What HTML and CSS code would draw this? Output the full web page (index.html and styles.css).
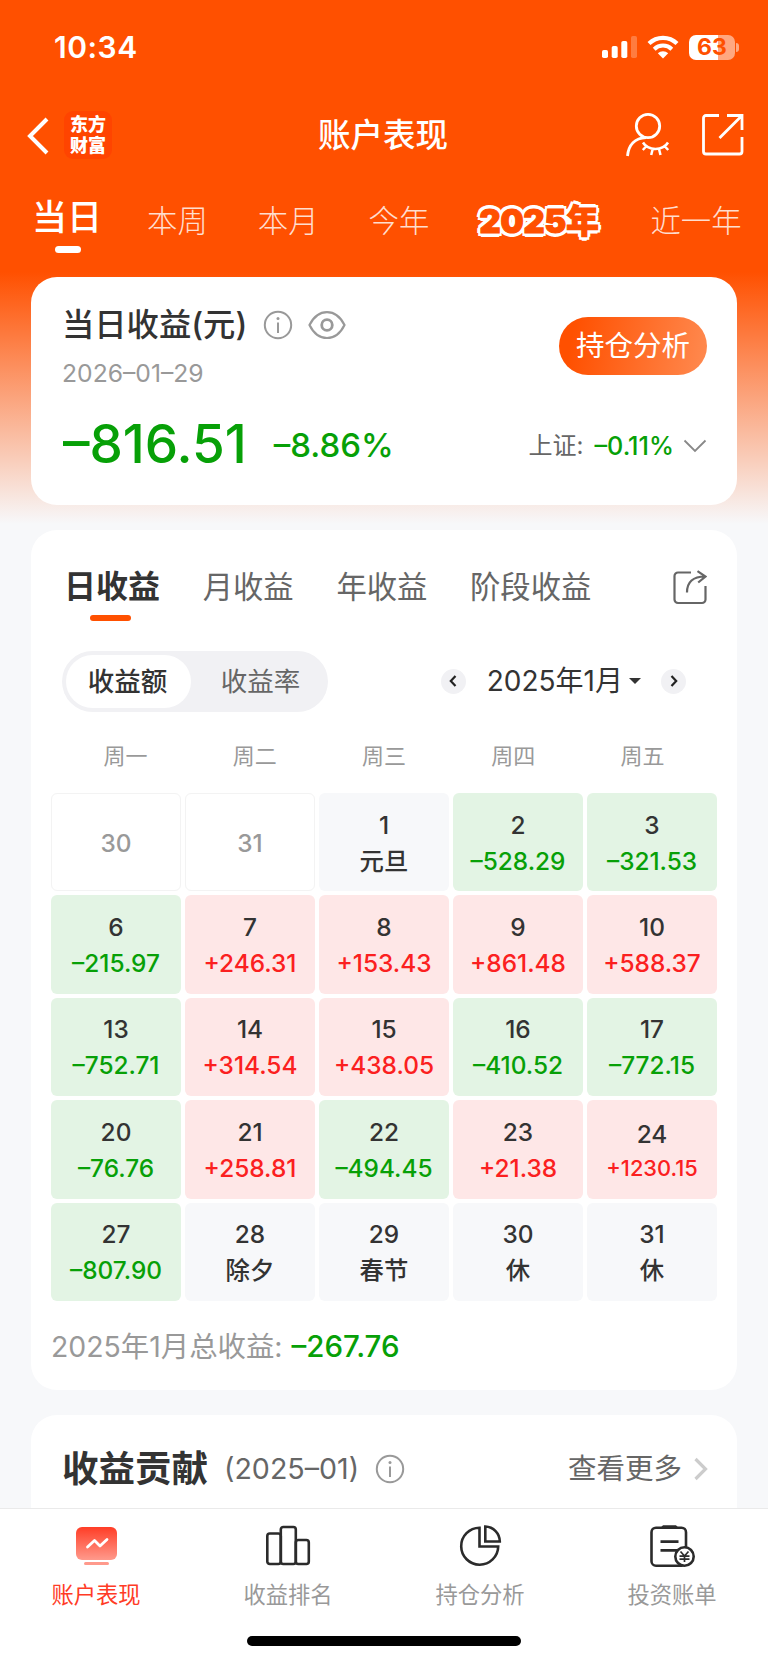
FILE: index.html
```
<!DOCTYPE html>
<html lang="zh-CN">
<head>
  <meta charset="UTF-8" />
  <title>账户表现</title>
  <link rel="stylesheet" href="styles.css">
</head>
<body>
  <div class="page">
    <div class="status">
      <span class="time">10:34</span>
      <div class="status-icons">
        <svg class="signal" width="36" height="24" viewBox="0 0 36 24" fill="#fff">
          <rect x="0" y="15" width="6" height="8" rx="1.8"/>
          <rect x="9.7" y="11" width="6" height="12" rx="1.8"/>
          <rect x="19.3" y="6" width="6" height="17" rx="1.8"/>
          <rect x="29" y="1" width="6" height="22" rx="1.8" opacity=".25"/>
        </svg>
        <svg class="wifi" width="32" height="24" viewBox="0 0 32 24" fill="none" stroke="#fff">
          <path d="M2 8.600a20 20 0 0 1 28 0" stroke-width="4.200"/>
          <path d="M7.200 14.200a12.600 12.600 0 0 1 17.600 0" stroke-width="4"/>
          <path d="M10.800 18.200a7.600 7.600 0 0 1 10.400 0L16 23.400z" fill="#fff" stroke="none"/>
        </svg>
        <div class="battery"><span>63</span></div>
        <i class="battery-nub"></i>
      </div>
    </div>

    <div class="nav">
      <svg class="back" width="22" height="38" viewBox="0 0 22 38" fill="none" stroke="#fff" stroke-width="4"><path d="M20 2L3 19l17 17"/></svg>
      <div class="logo">东方<br>财富</div>
      <h1>账户表现</h1>
      <svg class="user" width="46" height="46" viewBox="0 0 46 46" fill="none" stroke="#fff" stroke-width="2.8">
        <circle cx="24" cy="14" r="11.7"/>
        <path d="M3.500 44C4.500 33 11 26 22 25.500"/>
        <path d="M19 30.500c5 8.500 20 8.500 25 0M22.500 34l-3.700 4M28.700 37l-1.500 6M35 37l1.500 6M40.500 34l3.700 4" stroke-width="2.500"/>
      </svg>
      <svg class="share" width="44" height="44" viewBox="0 0 44 44" fill="none" stroke="#fff" stroke-width="2.8">
        <path d="M18 2.500H5a2.500 2.500 0 0 0-2.500 2.500v33.500A2.500 2.500 0 0 0 5 41h33.500a2.500 2.500 0 0 0 2.500-2.500V24M26 2.500h15V17M41 2.500L18.500 25"/>
      </svg>
    </div>

    <div class="periods">
      <span class="on">当日</span>
      <span>本周</span>
      <span>本月</span>
      <span>今年</span>
      <span class="year">2025年</span>
      <span>近一年</span>
    </div>

    <div class="content">
      <div class="card summary">
        <div class="left">
          <div class="title">
            <h2>当日收益(元)</h2>
            <svg class="info" width="30" height="30" viewBox="0 0 30 30" fill="none" stroke="#999" stroke-width="2"><circle cx="15" cy="15" r="13.200"/><path d="M15 12.500v10.500"/><circle cx="15" cy="8.500" r="1.500" fill="#999" stroke="none"/></svg>
            <svg class="eye" width="38" height="30" viewBox="0 0 38 30" fill="none" stroke="#999" stroke-width="2.200"><path d="M1.500 15C10-2.300 28-2.300 36.500 15 28 32.300 10 32.300 1.500 15z"/><circle cx="19" cy="15" r="5.300" stroke-width="2.800"/></svg>
          </div>
          <p class="date">2026–01–29</p>
          <p class="amount green"><b>–816.51</b><span>–8.86%</span></p>
        </div>
        <div class="right">
          <button>持仓分析</button>
          <p class="index">上证: <b class="green">–0.11%</b><svg width="24" height="14" viewBox="0 0 24 14" fill="none" stroke="#888" stroke-width="1.8"><path d="M1.500 1.500L12 12 22.500 1.500"/></svg></p>
        </div>
      </div>

      <div class="card calendar">
        <div class="tabs">
          <span class="on">日收益</span>
          <span>月收益</span>
          <span>年收益</span>
          <span class="stage">阶段收益</span>
          <svg width="34" height="36" viewBox="0 0 34 36" fill="none" stroke="#666" stroke-width="2.200">
            <path d="M18 3.500H5A3.500 3.500 0 0 0 1.500 7v23.500A3.500 3.500 0 0 0 5 34h24a3.500 3.500 0 0 0 3.500-3.500V17"/>
            <path d="M14 23.500C14 13 20 7.500 32 7.500M24.500 2.200l8 5.300-7.300 6"/>
          </svg>
        </div>

        <div class="tools">
          <div class="switch"><span class="on">收益额</span><span>收益率</span></div>
          <div class="month">
            <i class="arrow"><svg width="8" height="12" viewBox="0 0 8 12" fill="none" stroke="#222" stroke-width="2.200"><path d="M6.500 1L1.800 6l4.700 5"/></svg></i>
            <span>2025年1月</span>
            <i class="caret"></i>
            <i class="arrow"><svg width="8" height="12" viewBox="0 0 8 12" fill="none" stroke="#222" stroke-width="2.200"><path d="M1.500 1l4.700 5-4.700 5"/></svg></i>
          </div>
        </div>

        <div class="week"><span>周一</span><span>周二</span><span>周三</span><span>周四</span><span>周五</span></div>

        <div class="days">
          <div class="day out">30</div>
          <div class="day out">31</div>
          <div class="day rest">1<span>元旦</span></div>
          <div class="day down">2<span>–528.29</span></div>
          <div class="day down">3<span>–321.53</span></div>

          <div class="day down">6<span>–215.97</span></div>
          <div class="day up">7<span>+246.31</span></div>
          <div class="day up">8<span>+153.43</span></div>
          <div class="day up">9<span>+861.48</span></div>
          <div class="day up">10<span>+588.37</span></div>

          <div class="day down">13<span>–752.71</span></div>
          <div class="day up">14<span>+314.54</span></div>
          <div class="day up">15<span>+438.05</span></div>
          <div class="day down">16<span>–410.52</span></div>
          <div class="day down">17<span>–772.15</span></div>

          <div class="day down">20<span>–76.76</span></div>
          <div class="day up">21<span>+258.81</span></div>
          <div class="day down">22<span>–494.45</span></div>
          <div class="day up">23<span>+21.38</span></div>
          <div class="day up long">24<span>+1230.15</span></div>

          <div class="day down">27<span>–807.90</span></div>
          <div class="day rest">28<span>除夕</span></div>
          <div class="day rest">29<span>春节</span></div>
          <div class="day rest">30<span>休</span></div>
          <div class="day rest">31<span>休</span></div>
        </div>

        <p class="total">2025年1月总收益: <b class="green">–267.76</b></p>
      </div>

      <div class="card contrib">
        <h2>收益贡献</h2>
        <span class="range">(2025–01)</span>
        <svg class="info" width="30" height="30" viewBox="0 0 30 30" fill="none" stroke="#999" stroke-width="2"><circle cx="15" cy="15" r="13.200"/><path d="M15 12.500v10.500"/><circle cx="15" cy="8.500" r="1.500" fill="#999" stroke="none"/></svg>
        <span class="more">查看更多</span>
        <svg width="14" height="24" viewBox="0 0 14 24" fill="none" stroke="#ccc" stroke-width="3.200"><path d="M1.500 2l10 10-10 10"/></svg>
      </div>
    </div>

    <div class="tabbar">
      <div class="items">
        <div class="item on">
          <svg width="46" height="44" viewBox="0 0 46 44">
            <defs><linearGradient id="g" x1="0" y1="0" x2="0" y2="1"><stop offset="0" stop-color="#ff3d26"/><stop offset="1" stop-color="#ff9a8c"/></linearGradient></defs>
            <rect x="3" y="3" width="41" height="33" rx="6" fill="url(#g)"/>
            <rect x="11" y="38" width="25" height="3" rx="1.500" fill="#ff9a8c"/>
            <path d="M14.500 23l7-6.500 5.500 5.500 7-6.500" fill="none" stroke="#fff" stroke-width="2.800" stroke-linecap="round" stroke-linejoin="round"/>
          </svg>
          <span>账户表现</span>
        </div>
        <div class="item">
          <svg width="46" height="44" viewBox="0 0 46 44" fill="none" stroke="#2b2b2b" stroke-width="2.600">
            <rect x="2.300" y="9.500" width="13.500" height="30.500" rx="2.500"/>
            <rect x="15.800" y="3" width="15" height="37" rx="2.500"/>
            <rect x="30.800" y="16" width="13" height="24" rx="2.500"/>
          </svg>
          <span>收益排名</span>
        </div>
        <div class="item">
          <svg width="46" height="44" viewBox="0 0 46 44" fill="none" stroke="#2b2b2b" stroke-width="2.600">
            <path d="M22.500 3.700A18.500 18.500 0 1 0 41.200 22.500H22.500z"/>
            <path d="M28.300 2.500V17.500h14.500A15 15 0 0 0 28.300 2.500z"/>
          </svg>
          <span>持仓分析</span>
        </div>
        <div class="item">
          <svg width="46" height="44" viewBox="0 0 46 44" fill="none" stroke="#2b2b2b" stroke-width="2.600">
            <rect x="2.500" y="3.700" width="34.500" height="38" rx="4.500"/>
            <path d="M14 1.300h13l3 3H11z" fill="#2b2b2b" stroke="none"/>
            <path d="M11.500 17.700h18M11.500 26.300h17" stroke-width="2.800"/>
            <circle cx="35.500" cy="32.500" r="9.200" fill="#fff"/>
            <path d="M31.500 27.500l4 4.500 4-4.500M35.500 32v6M30.500 32.200h10M30.500 35.200h10" stroke-width="1.700"/>
          </svg>
          <span>投资账单</span>
        </div>
      </div>
      <div class="home"></div>
    </div>
  </div>
</body>
</html>
```
FILE: styles.css
```
* {
  box-sizing: border-box;
}
body, h1, h2, p {
  margin: 0;
}
body {
  font-family: Inter, "Noto Sans CJK SC", sans-serif;
  background: #f7f8fa;
  color: #333;
}
i, b {
  font-style: normal;
  font-weight: 500;
}
svg {
  display: block;
  flex: none;
}
.page {
  width: 768px;
  height: 1663px;
  display: flex;
  flex-direction: column;
  overflow: hidden;
  background: linear-gradient(#ff5000 272px, #f7f8fa 524px);
}
.green {
  color: #07a007;
}

/* status bar */
.status {
  height: 94px;
  padding: 0 29px 0 54px;
  display: flex;
  align-items: center;
  justify-content: space-between;
  color: #fff;
}
.time {
  font-size: 30px;
  font-weight: 600;
  letter-spacing: .5px;
}
.status-icons {
  display: flex;
  align-items: center;
}
.wifi {
  margin: 0 10px 0 9px;
}
.battery {
  width: 46px;
  height: 25px;
  border-radius: 7px;
  background: linear-gradient(90deg, #fff 29px, rgba(255,255,255,.5) 29px);
  color: #ff5000;
  font-size: 23px;
  font-weight: 700;
  line-height: 25px;
  text-align: center;
}
.battery-nub {
  width: 3px;
  height: 9px;
  margin-left: 1px;
  border-radius: 0 4px 4px 0;
  background: rgba(255,255,255,.5);
}

/* header */
.nav {
  height: 82px;
  padding: 0 23px 0 27px;
  display: flex;
  align-items: center;
  color: #fff;
}
.back {
  margin-top: 2px;
}
.logo {
  width: 48px;
  height: 48px;
  margin-left: 15px;
  padding-top: 4px;
  border-radius: 9px;
  background: #ff4400;
  font-size: 18px;
  font-weight: 900;
  line-height: 20.5px;
  text-align: center;
}
.nav h1 {
  margin-left: 206px;
  width: 132px;
  font-size: 32.5px;
  font-weight: 500;
  line-height: 40px;
  padding-top: 1px;
  white-space: nowrap;
}
.user {
  margin-left: 174px;
}
.share {
  margin-left: auto;
}
.periods {
  height: 101px;
  padding: 0 26px 0 32px;
  display: flex;
  gap: 50px;
  color: rgba(255,255,255,.82);
  font-size: 30.4px;
  font-weight: 300;
  line-height: 91px;
  white-space: nowrap;
}
.periods .on {
  position: relative;
  margin-right: -5px;
  color: #fff;
  font-size: 35px;
  font-weight: 500;
  line-height: 83px;
}
.periods .on::after {
  content: "";
  position: absolute;
  left: 23px;
  top: 70px;
  width: 26px;
  height: 7px;
  border-radius: 4px;
  background: #fff;
}
.periods .year {
  width: 121px;
  color: #ff5000;
  font-size: 32.5px;
  font-weight: 900;
  -webkit-text-stroke: 1.2px #ff5000;
  text-shadow: 3.6px 0 #fff, -3.6px 0 #fff, 0 3.6px #fff, 0 -3.6px #fff,
    2.6px 2.6px #fff, -2.6px 2.6px #fff, 2.6px -2.6px #fff, -2.6px -2.6px #fff;
}

.content {
  flex: 1;
  min-height: 0;
  padding: 0 31px;
  display: flex;
  flex-direction: column;
  gap: 25px;
  overflow: hidden;
}
.card {
  flex: none;
  border-radius: 26px;
  background: #fff;
}

/* today */
.summary {
  height: 228px;
  padding: 28px 30px 0 31px;
  display: flex;
  justify-content: space-between;
}
.title {
  height: 39px;
  display: flex;
  align-items: center;
}
.title h2 {
  font-size: 32.3px;
  font-weight: 500;
  line-height: 39px;
  white-space: nowrap;
}
.title .info {
  margin-left: 16px;
}
.title .eye {
  margin-left: 15px;
}
.date {
  margin-top: 14px;
  color: #999;
  font-size: 24.7px;
  font-weight: 400;
  line-height: 30px;
}
.amount {
  margin-top: 28px;
  padding-left: 1px;
  display: flex;
  line-height: 56px;
}
.amount b {
  font-size: 53px;
}
.amount span {
  margin-left: 27px;
  padding-top: 1px;
  font-size: 33px;
  font-weight: 500;
}
.right {
  display: flex;
  flex-direction: column;
  align-items: flex-end;
}
.right button {
  width: 148px;
  height: 58px;
  margin-top: 12px;
  padding: 0;
  border: 0;
  border-radius: 29px;
  background: linear-gradient(100deg, #ff5000 10%, #ff8a50);
  color: #fff;
  font-family: inherit;
  font-size: 28.5px;
  font-weight: 400;
  line-height: 58px;
}
.index {
  margin-top: 56px;
  display: flex;
  align-items: center;
  color: #666;
  font-size: 24px;
  line-height: 30px;
}
.index b {
  margin: 0 9px 0 11px;
  font-size: 25.2px;
}

/* calendar */
.calendar {
  height: 860px;
  padding: 0 20px;
}
.tabs {
  height: 114px;
  padding: 0 10px 0 13px;
  display: flex;
  align-items: center;
  justify-content: space-between;
  color: #666;
  font-size: 30.3px;
  line-height: 42px;
}
.tabs .on {
  position: relative;
  color: #333;
  font-size: 32px;
  font-weight: 700;
}
.tabs .on::after {
  content: "";
  position: absolute;
  left: 26px;
  bottom: -13px;
  width: 41px;
  height: 6px;
  border-radius: 3px;
  background: #ff5000;
}
.stage {
  margin-right: 39px;
}
.tools {
  height: 74px;
  padding: 0 31px 0 11px;
  display: flex;
  align-items: center;
  justify-content: space-between;
}
.switch {
  width: 266px;
  height: 61px;
  padding: 4px;
  display: flex;
  border-radius: 31px;
  background: #f1f1f4;
  color: #666;
  font-size: 26.5px;
  line-height: 52px;
  text-align: center;
}
.switch span {
  flex: 1;
  padding-left: 6px;
}
.switch .on {
  flex: none;
  width: 125px;
  padding: 0 2px 0 0;
  border-radius: 27px;
  background: #fff;
  color: #333;
  font-weight: 500;
}
.month {
  display: flex;
  align-items: center;
  font-size: 28px;
  line-height: 36px;
}
.arrow {
  width: 25px;
  height: 25px;
  display: flex;
  align-items: center;
  justify-content: center;
  border-radius: 50%;
  background: #f1f1f4;
}
.month span {
  margin-left: 21px;
}
.caret {
  margin: 0 20px 0 6px;
  border: 6.5px solid transparent;
  border-top-color: #333;
  border-bottom: 0;
}
.week {
  height: 75px;
  padding: 0 10px;
  display: flex;
  color: #999;
  font-size: 22px;
  line-height: 76px;
  text-align: center;
}
.week span {
  flex: 1;
}
.days {
  display: grid;
  grid-template-columns: repeat(5, 1fr);
  grid-auto-rows: 98.4px;
  gap: 4px;
}
.day {
  display: flex;
  flex-direction: column;
  align-items: center;
  justify-content: center;
  padding-top: 1px;
  border-radius: 6px;
  font-size: 24.4px;
  font-weight: 500;
  line-height: 36px;
}
.out {
  border: 1px solid #f3f3f3;
  color: #999;
}
.rest {
  background: #f7f8fa;
}
.up {
  background: #fee7e7;
}
.down {
  background: #e3f4e4;
}
.up span {
  color: #fb2020;
}
.down span {
  color: #07a007;
}
.long span {
  font-size: 21.8px;
  line-height: 32px;
}
.total {
  color: #999;
  font-size: 28.4px;
  font-weight: 400;
  line-height: 91px;
}
.total b {
  margin-left: 1px;
  font-size: 29.5px;
}

/* contribution */
.contrib {
  height: 200px;
  padding: 0 29px 93px 31px;
  display: flex;
  align-items: center;
  line-height: 44px;
}
.contrib h2 {
  font-size: 36.5px;
  font-weight: 700;
}
.range {
  margin: 0 16px 0 16px;
  color: #666;
  font-size: 28.6px;
  font-weight: 400;
}
.more {
  margin: 0 12px 0 auto;
  color: #666;
  font-size: 28.5px;
}

/* bottom bar */
.tabbar {
  height: 155px;
  border-top: 1px solid #eaeaea;
  background: #fff;
}
.items {
  height: 127px;
  display: flex;
}
.item {
  flex: 1;
  padding-top: 15px;
  display: flex;
  flex-direction: column;
  align-items: center;
  color: #999;
  font-size: 22.3px;
  line-height: 32px;
}
.item span {
  margin-top: 11px;
}
.item.on {
  color: #ff3b26;
}
.home {
  width: 274px;
  height: 10px;
  margin: 0 auto;
  border-radius: 5px;
  background: #000;
}
```
